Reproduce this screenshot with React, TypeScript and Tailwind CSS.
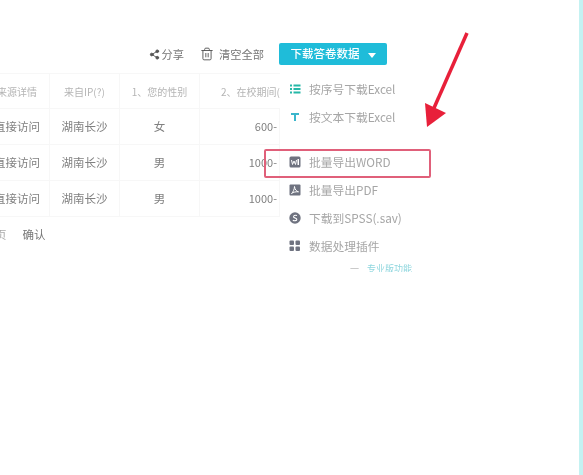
import { Share2, Trash2 } from 'lucide-react';

const rows = [
  { source: '直接访问', ip: '湖南长沙', sex: '女', time: '600-' },
  { source: '直接访问', ip: '湖南长沙', sex: '男', time: '1000-' },
  { source: '直接访问', ip: '湖南长沙', sex: '男', time: '1000-' },
];

const cell = 'flex h-9 items-center overflow-hidden whitespace-nowrap border-r border-b border-[#f7f7f7] text-[11.5px]';
const head = 'flex h-[35px] items-center overflow-hidden whitespace-nowrap border-r border-b border-[#f7f7f7] text-[10px] text-[#b5b5b5]';

function ListIcon() {
  return (
    <svg width="12" height="12" viewBox="0 0 12 12" fill="#26b8a8">
      <rect x="1" y="1.5" width="2" height="2" />
      <rect x="4.5" y="1.5" width="7" height="2" />
      <rect x="1" y="5" width="2" height="2" />
      <rect x="4.5" y="5" width="7" height="2" />
      <rect x="1" y="8.5" width="2" height="2" />
      <rect x="4.5" y="8.5" width="7" height="2" />
    </svg>
  );
}

function TIcon() {
  return (
    <svg width="10" height="10" viewBox="0 0 10 10" fill="#3bb6cc">
      <path d="M1 1h8v2H6v6H4V3H1z" />
    </svg>
  );
}

function WordIcon() {
  return (
    <svg width="12" height="12" viewBox="0 0 12 12">
      <rect x="0.5" y="0.5" width="11" height="11" rx="1.5" fill="#6f7380" />
      <path d="M2.5 4l1 4.5L5 5l1.5 3.5L7.5 4" fill="none" stroke="#fff" strokeWidth="1" />
      <rect x="8.5" y="3" width="1.5" height="6" fill="#fff" />
    </svg>
  );
}

function PdfIcon() {
  return (
    <svg width="12" height="12" viewBox="0 0 12 12">
      <rect x="0.5" y="0.5" width="11" height="11" rx="1" fill="#6f7380" />
      <path d="M2.5 9.5C4 8.5 5.5 5 5.5 2.5C5.8 5.5 7.5 7.5 9.5 7.8C7 7.6 4.5 8 2.5 9.5z" fill="none" stroke="#fff" strokeWidth="1" />
    </svg>
  );
}

function SpssIcon() {
  return (
    <svg width="12" height="12" viewBox="0 0 12 12">
      <circle cx="6" cy="6" r="5.7" fill="#6f7380" />
      <path d="M8 3.5C6 2.8 4.2 3.6 4.6 5C5 6.2 7.8 5.8 7.8 7.4C7.8 8.8 5.4 9 3.8 8.2" fill="none" stroke="#fff" strokeWidth="1.1" />
    </svg>
  );
}

function GridIcon() {
  return (
    <svg width="12" height="12" viewBox="0 0 12 12" fill="#6f7380">
      <rect x="0.5" y="0.5" width="4.5" height="4.5" rx="1" />
      <rect x="6.5" y="0.5" width="4.5" height="4.5" rx="1" />
      <rect x="0.5" y="6.5" width="4.5" height="4.5" rx="1" />
      <rect x="6.5" y="6.5" width="4.5" height="4.5" rx="1" />
    </svg>
  );
}

function MenuItem({ icon, label, className = '' }: { icon: React.ReactNode; label: string; className?: string }) {
  return (
    <div className={`flex h-7 items-center gap-[8px] pl-[9px] text-[11.75px] whitespace-nowrap text-[#a6a6a6] ${className}`}>
      <span className="flex w-3 justify-center">{icon}</span>
      {label}
    </div>
  );
}

export default function App() {
  return (
    <div className="flex h-[475px] w-[583px] overflow-hidden bg-white font-['Noto_Sans_CJK_SC',sans-serif] blur-[0.6px]">
      <main className="relative min-w-0 flex-1">
        <div className="w-[387px]">
          {/* Toolbar */}
          <div className="flex h-[73px] items-start justify-end pt-[43px] text-[11.25px] text-[#777]">
            <div className="mt-[3px] flex items-center gap-[1px]">
              <Share2 className="h-[11px] w-[11px] fill-[#555] text-[#555]" strokeWidth={2} />
              分享
            </div>
            <div className="mt-[3px] ml-4 flex items-center gap-[5px]">
              <Trash2 className="h-[14px] w-[14px] text-[#555]" strokeWidth={1.6} />
              清空全部
            </div>
            <div className="ml-[15px] flex h-[22px] w-[108px] items-center justify-center gap-2 rounded-[2px] bg-[#1fbcd9] text-[11.5px] font-medium text-white">
              下载答卷数据
              <span className="mt-[2px] h-0 w-0 border-x-4 border-t-[5px] border-x-transparent border-t-white" />
            </div>
          </div>

          {/* Table */}
          <div className="-ml-[15px] grid w-[295px] grid-cols-[65px_70px_80px_80px] border-t border-[#f7f7f7] text-[#808080]">
            <div className={`${head} justify-center`}>来源详情</div>
            <div className={`${head} justify-center`}>来自IP(?)</div>
            <div className={`${head} justify-center`}>1、您的性别</div>
            <div className={`${head} justify-end border-r-0`}>2、在校期间(</div>
            {rows.map((row, i) => (
              <div key={i} className="contents">
                <div className={`${cell} justify-center`}>{row.source}</div>
                <div className={`${cell} justify-center`}>{row.ip}</div>
                <div className={`${cell} justify-center`}>{row.sex}</div>
                <div className={`${cell} justify-end pr-[2px] text-[11px]`}>{row.time}</div>
              </div>
            ))}
          </div>

          {/* Pager */}
          <div className="mt-[9px] flex h-[18px] items-center text-[11.5px] text-[#777]">
            <span className="-ml-[5px] text-[#aaa]">页</span>
            <span className="ml-[16px]">确认</span>
          </div>
        </div>

        {/* Download dropdown */}
        <div className="absolute top-[75px] left-[280px] w-[150px] bg-white">
          <MenuItem icon={<ListIcon />} label="按序号下载Excel" />
          <MenuItem icon={<TIcon />} label="按文本下载Excel" />
          <MenuItem className="mt-[17px]" icon={<WordIcon />} label="批量导出WORD" />
          <MenuItem icon={<PdfIcon />} label="批量导出PDF" />
          <MenuItem icon={<SpssIcon />} label="下载到SPSS(.sav)" />
          <MenuItem icon={<GridIcon />} label="数据处理插件" />
          <div className="mt-[4px] h-[8px] overflow-hidden pl-[70px] text-[9px] leading-[9px] whitespace-nowrap text-[#8fd6de]">
            <span className="mr-2 text-[#bbb]">一</span>专业版功能
          </div>
        </div>

        {/* Annotation: highlight box */}
        <div className="absolute top-[149px] left-[264px] h-[29px] w-[167px] rounded-[2px] border-2 border-[#e0607a]" />

        {/* Annotation: arrow */}
        <svg className="absolute top-0 left-0" width="579" height="140" viewBox="0 0 579 140">
          <line x1="467" y1="33" x2="434" y2="108" stroke="#e8203a" strokeWidth="3.5" />
          <polygon points="425,103 446,113 427,127" fill="#e8203a" />
        </svg>
      </main>
      <div className="w-[4px] shrink-0 bg-[#c4f2f2]" />
    </div>
  );
}
